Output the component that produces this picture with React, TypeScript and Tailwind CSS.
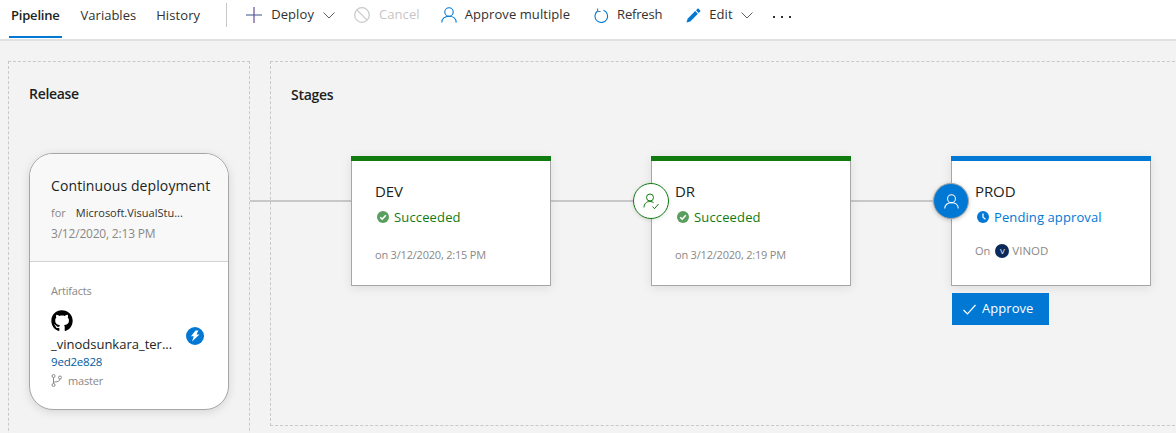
import React from "react";
import { FaGithub } from "react-icons/fa";

const font = { fontFamily: '"Open Sans", "Noto Sans", sans-serif' };

function PersonCheck() {
  return (
    <svg width="17" height="17" viewBox="0 0 17 17" fill="none" stroke="#107c10" strokeWidth="1">
      <circle cx="7" cy="4.500" r="3.500" />
      <path d="M1 14.500c0-3.800 2.300-6 6-6 1.500 0 2.700.4 3.600 1.100" />
      <path d="M9.500 13.500l2 2.200 4-4.700" />
    </svg>
  );
}

function Person({ color, size = 16 }: { color: string; size?: number }) {
  return (
    <svg width={size} height={size} viewBox="0 0 16 16" fill="none" stroke={color} strokeWidth="1.100" className="shrink-0">
      <circle cx="8" cy="5" r="4.200" />
      <path d="M0.800 15.500c0-3.800 3-6.300 7.200-6.300s7.200 2.500 7.200 6.300" />
    </svg>
  );
}

function PlusI() {
  return (
    <svg width="16" height="16" viewBox="0 0 16 16" className="shrink-0">
      <path d="M0 8h16" stroke="#5b6f99" strokeWidth="1.200" />
      <path d="M8 0v16" stroke="#6a4c9c" strokeWidth="1.200" />
    </svg>
  );
}

function BanI() {
  return (
    <svg width="16" height="16" viewBox="0 0 16 16" fill="none" stroke="#c8c8c8" strokeWidth="1.200" className="shrink-0">
      <circle cx="8" cy="8" r="7.300" />
      <path d="M2.900 2.900l10.200 10.200" />
    </svg>
  );
}

function RefreshI() {
  return (
    <svg width="15" height="15" viewBox="0 0 15 15" fill="none" stroke="#0078d4" strokeWidth="1.100" className="shrink-0">
      <path d="M9.500 2.300a6.300 6.300 0 1 1-6.200 1" />
      <path d="M3.600 0.500v3h3" stroke="#3f7fb5" />
    </svg>
  );
}

function Chev() {
  return (
    <svg width="12" height="7" viewBox="0 0 12 7" fill="none" stroke="#605e5c" strokeWidth="1" className="shrink-0">
      <path d="M0.500 0.500L6 6l5.500-5.500" />
    </svg>
  );
}

function Pencil() {
  return (
    <svg width="15" height="15" viewBox="0 0 15 15" fill="#0078d4" className="shrink-0">
      <path d="M0.500 14.500l1.100-3.800 7.600-7.600 2.700 2.700-7.600 7.600z" />
      <path d="M10 2.300l1.500-1.500c.3-.3.800-.3 1.100 0l1.600 1.600c.3.300.3.800 0 1.100L12.700 5z" />
    </svg>
  );
}

function Branch() {
  return (
    <svg width="12" height="13" viewBox="0 0 12 13" fill="none" stroke="#8a8886" strokeWidth="1" className="shrink-0">
      <circle cx="2.500" cy="2" r="1.500" />
      <circle cx="2.500" cy="11" r="1.500" />
      <circle cx="9" cy="3.500" r="1.500" />
      <path d="M2.500 3.500v6M2.500 8c3 0 6.500-.5 6.500-3" />
    </svg>
  );
}

function Bolt() {
  return (
    <svg width="12" height="12" viewBox="0 0 12 12" fill="#fff">
      <path d="M6.500 0.500h3L7.500 4.500h3L3 11.500l1.800-5.300H2z" />
    </svg>
  );
}

function Tick({ size = 12 }: { size?: number }) {
  return (
    <svg width={size} height={size} viewBox="0 0 12 12" fill="none" stroke="#fff" strokeWidth="1.600">
      <path d="M3.200 6.200l2 2 3.600-4" />
    </svg>
  );
}

function ClockI() {
  return (
    <svg width="12" height="12" viewBox="0 0 12 12" className="shrink-0">
      <circle cx="6" cy="6" r="6" fill="#0078d4" />
      <path d="M6 2.500V6.300l2.500 2" fill="none" stroke="#fff" strokeWidth="1.300" />
    </svg>
  );
}

function Tb({ icon, label, gap = "gap-[9px]", cls = "text-[#323130]", track = "tracking-[0.08px]" }: { icon: React.ReactNode; label: string; gap?: string; cls?: string; track?: string }) {
  return (
    <div className={`flex items-center ${gap} ${cls}`}>
      {icon}
      <span className={`text-[13px] whitespace-nowrap ${track}`}>{label}</span>
    </div>
  );
}

function StatusOk() {
  return (
    <div className="flex items-center gap-[5px] mt-[7px] ml-[2px] text-[#107c10]">
      <span className="w-3 h-3 rounded-full bg-[#5a9e5f] flex items-center justify-center">
        <Tick />
      </span>
      <span className="text-[13px] tracking-[0.15px] leading-[18px]">Succeeded</span>
    </div>
  );
}

function Stage({ name, color, status, footer, children }: { name: string; color: string; status: React.ReactNode; footer: React.ReactNode; children?: React.ReactNode }) {
  return (
    <div className="relative w-[200px] shrink-0">
      <div className="h-[130px] bg-white border border-[#a6a6a6] border-t-0 shadow-[0_2px_10px_rgba(0,0,0,0.09)]">
        <div className="h-[5px] -mx-px" style={{ background: color }} />
        <div className="pl-[23px] pt-[20px]">
          <div className="text-[15px] leading-[20px] tracking-[-0.1px] text-[#201f1e]">{name}</div>
          {status}
          {footer}
        </div>
      </div>
      {children}
    </div>
  );
}

function Line() {
  return <div className="w-[100px] h-0.5 bg-[#c8c8c8] mt-[44px] shrink-0" />;
}

export default function App() {
  return (
    <div className="w-[1176px] h-[433px] overflow-hidden bg-[#f3f3f3]" style={font}>
      <div className="h-[41px] bg-white border-b-2 border-[#e1e1e1] flex items-start pl-[11px]">
        <div className="relative pt-[6px] h-[39px] text-[13px] font-semibold tracking-[-0.2px] text-[#201f1e]">
          Pipeline
          <div className="absolute left-[-2px] right-[-2px] top-[36px] h-0.5 bg-[#0078d4]" />
        </div>
        <div className="pt-[6px] ml-[21px] text-[13px] text-[#323130]">Variables</div>
        <div className="pt-[6px] ml-[20px] text-[13px] tracking-[0.1px] text-[#323130]">History</div>
        <div className="w-px h-[24px] mt-[3px] ml-[26px] bg-[#c8c8c8]" />
        <div className="flex items-center h-[30px] ml-[19px]">
          <Tb icon={<PlusI />} label="Deploy" />
          <div className="ml-[9px]"><Chev /></div>
          <div className="ml-[19px]">
            <Tb icon={<BanI />} label="Cancel" cls="text-[#c8c6c4]" />
          </div>
          <div className="ml-[21px]">
            <Tb icon={<Person color="#0078d4" />} label="Approve multiple" gap="gap-[8px]" />
          </div>
          <div className="ml-[24px]">
            <Tb icon={<RefreshI />} label="Refresh" gap="gap-[8px]" track="tracking-[-0.2px]" />
          </div>
          <div className="ml-[24px]">
            <Tb icon={<Pencil />} label="Edit" gap="gap-[8px]" />
          </div>
          <div className="ml-[8px]"><Chev /></div>
          <div className="ml-[20px] flex gap-[6px] mt-[3px]">
            <span className="w-[2px] h-[2px] bg-[#323130]" />
            <span className="w-[2px] h-[2px] bg-[#323130]" />
            <span className="w-[2px] h-[2px] bg-[#323130]" />
          </div>
        </div>
      </div>

      <div className="flex items-start pt-[20px] pl-[8px]">
        <div className="w-[242px] h-[400px] shrink-0 border border-dashed border-[#c8c8c8] pl-[20px] pt-[22px]">
          <div className="text-[14px] leading-[19px] font-semibold tracking-[-0.3px] text-[#201f1e]">Release</div>
          <div className="w-[200px] h-[257px] mt-[50px] rounded-[24px] border border-[#a6a6a6] bg-white overflow-hidden shadow-[0_2px_10px_rgba(0,0,0,0.12)]">
            <div className="h-[108px] bg-[#f8f8f8] border-b border-[#d2d2d2] pl-[21px] pt-[22px]">
              <div className="text-[14px] leading-[20px] tracking-[0.1px] text-[#201f1e] whitespace-nowrap">Continuous deployment</div>
              <div className="flex mt-[9px] text-[11px] leading-[15px] text-[#8a8886]">
                <span>for</span>
                <span className="ml-[10px] text-[#323130]">Microsoft.VisualStu...</span>
              </div>
              <div className="mt-[6px] text-[12px] leading-[15px] tracking-[-0.2px] text-[#8a8886]">3/12/2020, 2:13 PM</div>
            </div>
            <div className="pl-[21px] pt-[21px]">
              <div className="text-[11px] leading-[15px] tracking-[-0.2px] text-[#8a8886]">Artifacts</div>
              <FaGithub size={22} color="#000" className="mt-[12px]" />
              <div className="flex items-start">
                <span className="w-[135px] text-[13px] leading-[17px] text-[#201f1e] mt-[4px] whitespace-nowrap">_vinodsunkara_ter...</span>
                <span className="w-[18px] h-[18px] rounded-full bg-[#0078d4] flex items-center justify-center -mt-[5px]">
                  <Bolt />
                </span>
              </div>
              <div className="text-[11.500px] leading-[16px] tracking-[-0.2px] text-[#005a9e] mt-[1px]">9ed2e828</div>
              <div className="flex items-center mt-[3px] text-[11px] leading-[15px] tracking-[-0.2px] text-[#8a8886]">
                <Branch />
                <span className="ml-[5px]">master</span>
              </div>
            </div>
          </div>
        </div>

        <div className="ml-[20px] w-[930px] h-[365px] shrink-0 border border-dashed border-[#c8c8c8] border-r-0 relative">
          <div className="pl-[20px] pt-[23px] text-[14px] leading-[19px] font-semibold tracking-[-0.3px] text-[#201f1e]">Stages</div>
          <div className="flex items-start mt-[52px] -ml-[21px]">
            <div className="w-[101px] h-0.5 bg-[#c8c8c8] mt-[44px] shrink-0" />
            <Stage
              name="DEV"
              color="#107c10"
              status={<StatusOk />}
              footer={<div className="mt-[21px] text-[11px] leading-[15px] tracking-[-0.2px] text-[#8a8886]">on 3/12/2020, 2:15 PM</div>}
            />
            <Line />
            <Stage
              name="DR"
              color="#107c10"
              status={<StatusOk />}
              footer={<div className="mt-[21px] text-[11px] leading-[15px] tracking-[-0.2px] text-[#8a8886]">on 3/12/2020, 2:19 PM</div>}
            >
              <div className="absolute -left-[18px] top-[27px] w-9 h-9 rounded-full bg-white border border-[#107c10] flex items-center justify-center shadow-[0_1px_4px_rgba(0,0,0,0.12)]">
                <PersonCheck />
              </div>
            </Stage>
            <Line />
            <Stage
              name="PROD"
              color="#0078d4"
              status={
                <div className="flex items-center gap-[5px] mt-[7px] ml-[2px] text-[#0078d4]">
                  <ClockI />
                  <span className="text-[13px] tracking-[0.1px] leading-[18px] whitespace-nowrap">Pending approval</span>
                </div>
              }
              footer={
                <div className="flex items-center mt-[17px] text-[11px] leading-[15px] text-[#8a8886]">
                  On
                  <span className="ml-[5px] w-[14px] h-[14px] rounded-full bg-[#0b2a5b] text-white text-[8px] flex items-center justify-center">V</span>
                  <span className="ml-[3px] text-[11.500px]">VINOD</span>
                </div>
              }
            >
              <div className="absolute -left-[18px] top-[27px] w-9 h-9 rounded-full bg-[#0078d4] border border-[#a6a6a6] flex items-center justify-center shadow-[0_1px_4px_rgba(0,0,0,0.2)]">
                <Person color="#fff" size={15} />
              </div>
              <div className="w-[97px] h-8 mt-[7px] ml-px bg-[#0078d4] text-white flex items-center pl-[11px] gap-[6px]">
                <svg width="13" height="11" viewBox="0 0 13 11" fill="none" stroke="#fff" strokeWidth="1.200">
                  <path d="M0.500 6l4 4 8-9" />
                </svg>
                <span className="text-[13px] tracking-[0.05px]">Approve</span>
              </div>
            </Stage>
          </div>
        </div>
      </div>
    </div>
  );
}
